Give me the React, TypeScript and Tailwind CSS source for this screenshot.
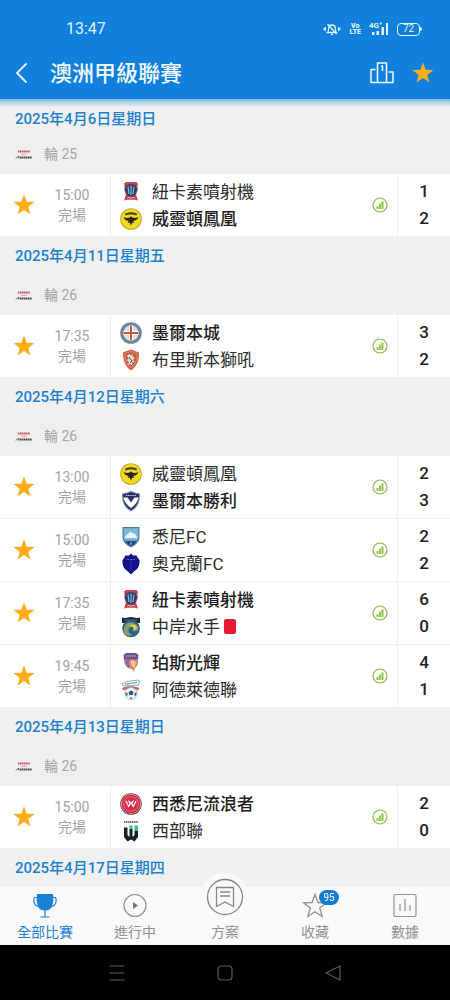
import React from "react";

type Crest =
  | "jets" | "phoenix" | "city" | "roar" | "victory" | "sydney"
  | "auckland" | "mariners" | "glory" | "adelaide" | "wanderers" | "western";

interface Team {
  name: string;
  crest: Crest;
  score: number;
  winner?: boolean;
  redCard?: boolean;
}

interface Match {
  time: string;
  teams: [Team, Team];
}

interface Day {
  date: string;
  round?: number;
  matches: Match[];
}

const days: Day[] = [
  {
    date: "2025年4月6日星期日",
    round: 25,
    matches: [
      { time: "15:00", teams: [{ name: "紐卡素噴射機", crest: "jets", score: 1 }, { name: "威靈頓鳳凰", crest: "phoenix", score: 2, winner: true }] },
    ],
  },
  {
    date: "2025年4月11日星期五",
    round: 26,
    matches: [
      { time: "17:35", teams: [{ name: "墨爾本城", crest: "city", score: 3, winner: true }, { name: "布里斯本獅吼", crest: "roar", score: 2 }] },
    ],
  },
  {
    date: "2025年4月12日星期六",
    round: 26,
    matches: [
      { time: "13:00", teams: [{ name: "威靈頓鳳凰", crest: "phoenix", score: 2 }, { name: "墨爾本勝利", crest: "victory", score: 3, winner: true }] },
      { time: "15:00", teams: [{ name: "悉尼FC", crest: "sydney", score: 2 }, { name: "奧克蘭FC", crest: "auckland", score: 2 }] },
      { time: "17:35", teams: [{ name: "紐卡素噴射機", crest: "jets", score: 6, winner: true }, { name: "中岸水手", crest: "mariners", score: 0, redCard: true }] },
      { time: "19:45", teams: [{ name: "珀斯光輝", crest: "glory", score: 4, winner: true }, { name: "阿德萊德聯", crest: "adelaide", score: 1 }] },
    ],
  },
  {
    date: "2025年4月13日星期日",
    round: 26,
    matches: [
      { time: "15:00", teams: [{ name: "西悉尼流浪者", crest: "wanderers", score: 2, winner: true }, { name: "西部聯", crest: "western", score: 0 }] },
    ],
  },
  { date: "2025年4月17日星期四", matches: [] },
];

const crests: Record<Crest, React.ReactNode> = {
  jets: (
    <>
      <path d="M4 2.500 6 1h10l2 1.500-.6 3 .4 3-1.800 5.500.5 1 1.500 4.500-3.500-.8H7.500L4 19.500 5.500 15l.5-1-1.800-5.500.4-3z" fill="#c8434a" />
      <path d="M6 4.500C8 2.800 14 2.800 16 4.500l1 3.500c0 3-1.500 5.500-3.500 7.500h-5C6.500 13.500 5 11 5 8z" fill="#24456f" />
      <path d="M8 5.500 9 13M11 4.500V14M14 5.500 13 13" stroke="#9fc0dc" strokeWidth="1.100" />
      <path d="M7.500 17.500 9 16l2 1.500 2-1.500 1.500 1.500" stroke="#f1b2b2" fill="none" />
    </>
  ),
  phoenix: (
    <>
      <circle cx="11" cy="11" r="10.800" fill="#b9a21d" />
      <circle cx="11" cy="11" r="10" fill="#f3da21" />
      <path d="M5 5.800C8 3.800 14 3.800 17 5.800l-.5 1.700C13.500 6 8.500 6 5.500 7.500z" fill="#4b431a" />
      <path d="M3.500 9c2.500 1.200 4.500 1 6 .6L11 8.300l1.500 1.300c1.500.4 3.500.6 6-.6-.8 2.400-2.500 3.600-5.200 3.900l1 2-2-.3L11 17.500l-1.300-2.900-2 .3 1-2C6 12.600 4.300 11.400 3.500 9z" fill="#2b2718" />
    </>
  ),
  city: (
    <>
      <circle cx="11" cy="11" r="10.800" fill="#70859a" />
      <circle cx="11" cy="11" r="7.500" fill="#fff" />
      <circle cx="11" cy="11" r="7" fill="#cfe2f2" />
      <path d="M11 3.500v15M3.500 11h15" stroke="#fff" strokeWidth="4" />
      <path d="M11 3.500v15M3.500 11h15" stroke="#dc5136" strokeWidth="2" />
    </>
  ),
  roar: (
    <>
      <path d="M3 3.500 11 .5l8 3C19 11 17.500 17 11 21.500 4.500 17 3 11 3 3.500z" fill="#d75e3c" />
      <path d="M4.800 4.800 11 2.500l6.200 2.300c-.2 6-1.500 10.500-6.200 14.200-4.700-3.700-6-8.200-6.200-14.200z" fill="#b9604c" stroke="#f2a184" strokeWidth=".6" />
      <path d="m7 7 2-2 2 1.500L13 5l-.5 3 2.500 1-2 1.500 1.500 3-2.500-.5.500 4-2-2-2.500 1 1-3L6.500 11l2.500-1z" fill="#f2ded4" />
      <path d="m9 8 3 4-2 2" stroke="#4d3936" fill="none" />
    </>
  ),
  victory: (
    <>
      <path d="M2 3.500Q7 3 11 .8q4 2.200 9 2.700c.5 8-2 14-9 18C4 17.500 1.500 11.500 2 3.500z" fill="#8a94b4" />
      <path d="M3 4.300Q7 4 11 2q4 2 8 2.300c.3 7-2 12.200-8 16-6-3.800-8.300-9-8-16z" fill="#2b3366" />
      <path d="m3.200 7.500 4.300 0L11 12.500l3.500-5 4.300 0c-1 4-3.800 7.500-7.800 10.500-4-3-6.800-6.500-7.800-10.500z" fill="#fff" />
      <path d="M6 5.500h10" stroke="#c5cbe0" strokeWidth="1.200" strokeDasharray="1.200 .6" />
    </>
  ),
  sydney: (
    <>
      <path d="M2.500 1h17v9c0 5-2 8-8.500 11.500C4.500 18 2.500 15 2.500 10z" fill="#4b7ba5" />
      <path d="M3.700 2.200h14.600V10c0 1.800-.4 3.300-1.200 4.600H4.900C4.100 13.300 3.700 11.800 3.700 10z" fill="#7fb7dd" />
      <path d="m4.500 12 2-3 2-1.500 2-2 2 1.500 2.500 1 2.500 4z" fill="#e8f4fb" />
      <path d="M6 15.500h10c-1 1.900-2.600 3.300-5 4.600-2.400-1.300-4-2.700-5-4.600z" fill="#1e3c68" />
      <path d="m11 15.500 1 3h-2z" fill="#c5ddeb" />
    </>
  ),
  auckland: (
    <>
      <path d="M11 .5 13 2.500h3.500L18 5l1.500 2c.3 6-1.500 9-5 11L11 21.500 7.500 18c-3.500-2-5.300-5-5-11L4 5l1.500-2.500H9z" fill="#12108a" />
      <path d="M7 6.500h2M10 6.500h2M13 6.500h2" stroke="#6062ac" />
      <path d="M11 8v10" stroke="#4545a0" strokeWidth=".7" />
    </>
  ),
  mariners: (
    <>
      <path d="M2 1.500 5 2l6-1 6 1 3-.5V7H2z" fill="#1b2a34" />
      <path d="M5 4h12" stroke="#99a6a8" strokeWidth="1" strokeDasharray="1 .6" />
      <circle cx="11" cy="12.500" r="8.800" fill="#28618b" />
      <path d="M4 17C2.500 11 6 6 11.500 6.500c5 .5 7.500 4 6.500 8-2 .8-4 1-6.500.2 2.200-.2 3-1.700 2-3-1.500-1.500-4.500-.7-5 2-.4 2.800 1.500 4.700 4.500 5.300-4 1.500-7.500.3-9-2z" fill="#88a068" />
      <path d="M9 10c2-2.500 7-2 8 1.500-.5 2-2.500 2.500-4 2.200 1.500-1.500.5-3.700-4-3.700z" fill="#efcf45" />
    </>
  ),
  glory: (
    <>
      <path d="M3.500 3 6 1h10l2.500 2-.5 5H4z" fill="#6f4f91" />
      <path d="M6 4h10" stroke="#d0bfe0" strokeWidth="1.200" strokeDasharray="1.300 .6" />
      <path d="M4 7.500h14c.5 4-.5 7-3 8.500l-1 4-2-3C7 16.500 4 13 4 7.500z" fill="#d98968" />
      <path d="M5 8h5l-1.500 3 2 3-1.500 2C6.500 14.500 5 12 5 8z" fill="#8c6aa3" />
      <path d="m11 8 4 1 1.500 3-2 1 .5 2.500-3-1.500-1-2.500z" fill="#f0c5a7" />
    </>
  ),
  adelaide: (
    <>
      <path d="M2 5 7 2.500 18 1l1.500 1-1 4L3 7z" fill="#fff" stroke="#5f9dc3" strokeWidth=".8" />
      <path d="M5 5.200 17 3.500" stroke="#4d91bc" strokeWidth="1.400" strokeDasharray="1.500 .6" />
      <path d="M2 9c5-2.500 12-2.500 17.500 0l-1.500 2.500C13 9 8 9 3.500 11.500z" fill="#c86660" />
      <circle cx="11" cy="14.500" r="6" fill="#f4f8fa" stroke="#8fb3c8" strokeWidth=".8" />
      <path d="m8.500 13 2.500-1.500 2.500 1.500-1 3h-3zM5.300 14l2-.5.3 2.500-1 1.200zM16.700 14l-2-.5-.3 2.500 1 1.200zM9.500 18.500h3l-1.500 2z" fill="#32567f" />
    </>
  ),
  wanderers: (
    <>
      <circle cx="11" cy="11" r="10.800" fill="#6b3a44" />
      <circle cx="11" cy="11" r="10" fill="#f3c9cf" />
      <circle cx="11" cy="11" r="9.400" fill="#d52c48" />
      <circle cx="11" cy="11" r="7.200" fill="none" stroke="#ed8396" strokeWidth=".7" />
      <path d="m6 8 2.700 5.500L11 9.500l2.300 4L16 8M8.500 7.500l2 3.500M13.500 7.500l-2 3.500" fill="none" stroke="#fff" strokeWidth="1.200" />
    </>
  ),
  western: (
    <>
      <path d="M4 2h14" stroke="#444" strokeWidth="1.600" strokeDasharray="1.400 .5" />
      <path d="M4 7.500h3.500V15L9.500 17V9h3v8l2-2V11H18v6l-3.500 4.500L11 19.500l-3.500 2L4 17z" fill="#16242a" />
      <path d="M14.500 5.500H18V11h-3.500zM9.500 5.500h3V9h-3z" fill="#39bd8d" />
    </>
  ),
};

function TeamCrest({ crest }: { crest: Crest }) {
  return (
    <svg viewBox="0 0 22 22" fill="none" aria-hidden="true" className="h-[22px] w-[22px] shrink-0">
      {crests[crest]}
    </svg>
  );
}

function SolidStar() {
  return (
    <svg viewBox="0 0 22 22" aria-hidden="true" className="h-[22px] w-[22px]">
      <path d="m11 .3 2.700 7.500 7.800.3-6.200 4.800 2.200 7.500L11 16.100l-6.500 4.300 2.200-7.500L.5 8.100l7.800-.3z" fill="#fdad17" />
    </svg>
  );
}

function LeagueLogo() {
  return (
    <svg viewBox="0 0 18 12" aria-hidden="true" className="h-3 w-[18px]">
      <path d="M3 2.500h12" stroke="#d4545c" strokeWidth="2" strokeDasharray="1.600 .4" />
      <path d="M6 5.300h6" stroke="#e3a5a8" strokeWidth="1" />
      <path d="m1 9.500 2-2h1v2" stroke="#444" fill="none" />
      <path d="M5 8.500h12" stroke="#4b4b4b" strokeWidth="2" strokeDasharray="1.500 .4" />
    </svg>
  );
}

function StatusBar() {
  return (
    <div className="flex h-[47px] items-center justify-between pr-7 pl-[66px] pt-[11px] text-[#dff5ff]">
      <time className="text-base">13:47</time>
      <div className="flex items-center gap-2">
        <svg viewBox="0 0 20 14" fill="none" stroke="currentColor" strokeWidth="1.300" aria-hidden="true" className="h-3.5 w-5">
          <path d="M5.500 10.500h9c-1-1-1.200-2-1.200-4 0-2-1.300-3.500-3.300-3.500S6.700 4.500 6.700 6.500c0 2-.2 3-1.200 4zM9 12.500h2M5.500 2l9 10" />
          <path d="m4 4.500-3 2.500 3 2.500zM16 4.500l3 2.500-3 2.500z" fill="currentColor" stroke="none" />
        </svg>
        <div className="flex flex-col items-center font-[Roboto] text-[7px] leading-[6px] font-black">
          <span>Vo</span>
          <span>LTE</span>
        </div>
        <div className="relative h-3.5 w-5">
          <svg viewBox="0 0 20 14" fill="currentColor" aria-hidden="true" className="h-3.5 w-5">
            <path d="M3 10h2.500v3H3zM7.500 9H10v4H7.500zM12.500 5H15v8h-2.500zM17 1h2v12h-2z" />
          </svg>
          <span className="absolute top-0 left-0 text-[8px] leading-[8px] font-bold">4G⁺</span>
        </div>
        <div className="flex items-center">
          <span className="flex h-[13px] w-[23px] items-center justify-center rounded-[4px] border border-current text-[10px] leading-none">72</span>
          <span className="h-1 w-0.5 rounded-r bg-current" />
        </div>
      </div>
    </div>
  );
}

function Header() {
  return (
    <header className="relative z-20 shrink-0 bg-[#1080dc]">
      <StatusBar />
      <div className="flex h-[52px] items-center pr-4 pl-3.5 text-[#eefaff]">
        <button aria-label="返回" className="flex h-8 w-9 items-center">
          <svg viewBox="0 0 14 22" fill="none" stroke="currentColor" strokeWidth="1.800" aria-hidden="true" className="h-[22px] w-3.5">
            <path d="M12.500 1.500 3 11l9.500 9.500" />
          </svg>
        </button>
        <h1 className="flex-1 pt-0.5 text-[22px] leading-8 font-medium">澳洲甲級聯賽</h1>
        <button aria-label="積分榜" className="mr-[18px]">
          <svg viewBox="0 0 24 22" fill="none" stroke="currentColor" strokeWidth="1.500" strokeLinejoin="round" aria-hidden="true" className="h-[22px] w-6">
            <path d="M7.500 20.500V1h9v19.500M5.500 7.500H1v13h22V10h-4.500M11.200 4.500l1.300-.8V9" />
          </svg>
        </button>
        <button aria-label="收藏聯賽">
          <SolidStar />
        </button>
      </div>
      <div className="absolute inset-x-0 top-full h-2 bg-linear-to-b from-[#1080dc]/50 to-transparent" />
    </header>
  );
}

function MatchRow({ match }: { match: Match }) {
  return (
    <li className="flex h-[62px] box-content border-b border-[#f1f1f1] bg-white last:border-b-0">
      <button aria-label="收藏比賽" className="flex w-12 items-center justify-center">
        <SolidStar />
      </button>
      <div className="flex w-[63px] flex-col justify-center border-r border-[#eeeeee] pr-3.5 text-center text-[14px] leading-5 text-[#a2a2a2]">
        <time>{match.time}</time>
        <span>完場</span>
      </div>
      <div className="flex min-w-0 flex-1 flex-col justify-center pl-[9px]">
        {match.teams.map((team) => (
          <div key={team.name} className="flex h-[27px] items-center">
            <TeamCrest crest={team.crest} />
            <span className={team.winner ? "ml-2.5 pt-0.5 text-[17px] leading-[25px] font-medium text-[#1d1d1d]" : "ml-2.5 pt-0.5 text-[17px] leading-[25px] text-[#2c2c2c]"}>
              {team.name}
            </span>
            {team.redCard && <span role="img" aria-label="紅牌" className="ml-1 h-[15px] w-3 rounded-[2px] bg-[#e5192f]" />}
          </div>
        ))}
      </div>
      <button aria-label="比賽統計" className="mr-2 flex w-[18px] items-center justify-center">
        <svg viewBox="0 0 16 16" aria-hidden="true" className="h-4 w-4">
          <circle cx="8" cy="8" r="7" fill="none" stroke="#88b94a" strokeWidth="1.200" />
          <path d="M4.500 9h2v3h-2zM7 6.500h1.800V12H7zM9.400 4.500h2.100V12H9.400z" fill="#8cc63f" />
        </svg>
      </button>
      <div className="flex w-[53px] flex-col justify-center border-l border-[#f0f0f0] text-center text-[17px] leading-[27px] font-medium text-[#222222]">
        {match.teams.map((team) => (
          <span key={team.name}>{team.score}</span>
        ))}
      </div>
    </li>
  );
}

function DaySection({ day }: { day: Day }) {
  return (
    <section className="first:-mt-1">
      <h2 className="sticky top-0 z-10 flex h-10 items-center border-b border-[#eaeaea] bg-[#f0f0f0] pt-0.5 pl-[15px] text-[15px] font-medium text-[#1a80cd]">
        {day.date}
      </h2>
      {day.round && (
        <div className="flex h-[39px] items-center gap-[11px] bg-[#efefef] pl-[15px] text-[14px] text-[#a6a6a6]">
          <LeagueLogo />
          <span>輪 {day.round}</span>
        </div>
      )}
      <ul>
        {day.matches.map((match) => (
          <MatchRow key={match.time} match={match} />
        ))}
      </ul>
    </section>
  );
}

const tabClass = "flex flex-1 flex-col items-center gap-[3px] pt-1.5 text-[14px] leading-5 text-[#929292]";

function TabBar() {
  return (
    <nav className="relative z-10 flex h-[58px] shrink-0 bg-[#f9f9f9]">
      <a href="#all" aria-current="page" className="flex flex-1 flex-col items-center gap-[3px] pt-1.5 text-[14px] leading-5 text-[#1a80d2]">
        <svg viewBox="0 0 26 26" fill="none" stroke="currentColor" strokeWidth="1.200" aria-hidden="true" className="h-[26px] w-[26px]">
          <path d="M5.500 1.500h15c.5 3 .3 8-.7 11-1 2.500-3.800 4.500-6.800 4.500s-5.800-2-6.800-4.500c-1-3-1.200-8-.7-11z" fill="currentColor" />
          <path d="M5.500 4.500h-3C1.200 7 1.500 12.500 6.500 13.500M20.500 4.500h3c1.300 2.500 1 8-4 9M13 17v7M8.500 24h9" />
        </svg>
        全部比賽
      </a>
      <a href="#live" className={tabClass}>
        <svg viewBox="0 0 26 26" fill="none" stroke="currentColor" strokeWidth="1.200" aria-hidden="true" className="h-[26px] w-[26px]">
          <circle cx="13" cy="12.500" r="11" />
          <path d="M11 9v7l5-3.500z" fill="#777" stroke="none" />
        </svg>
        進行中
      </a>
      <a href="#plans" className="relative flex flex-1 flex-col items-center pt-[35px] text-[14px] leading-5 text-[#929292]">
        <span className="absolute -top-3.5 flex h-12 w-12 items-center justify-center rounded-full bg-[#f9f9f9]">
          <svg viewBox="0 0 38 38" fill="none" stroke="#858585" strokeWidth="1.300" aria-hidden="true" className="h-[38px] w-[38px]">
            <circle cx="19" cy="19" r="17.500" />
            <path d="M10.500 9.500h17v19L19 24l-8.500 4.500zM14 14h10M14 18h10" />
          </svg>
        </span>
        方案
      </a>
      <a href="#favourites" className={tabClass}>
        <span className="relative">
          <svg viewBox="0 0 26 26" fill="none" stroke="currentColor" strokeWidth="1.300" aria-hidden="true" className="h-[26px] w-[26px]">
            <path d="m13 1.500 3 8 8.500.3-6.800 5.200 2.500 8.500L13 18.700 5.800 23.500 8.300 15 1.500 9.800l8.500-.3z" />
          </svg>
          <span className="absolute -top-[3px] left-[17px] flex h-[15px] w-5 items-center justify-center rounded-full bg-[#147bd0] text-[10px] leading-none text-white">95</span>
        </span>
        收藏
      </a>
      <a href="#data" className={tabClass}>
        <svg viewBox="0 0 26 26" fill="none" stroke="currentColor" strokeWidth="1.200" aria-hidden="true" className="h-[26px] w-[26px]">
          <rect x="2" y="1.500" width="22" height="22" rx="1.500" />
          <path d="M8 11v7M13 6v12M18 12v6" />
        </svg>
        數據
      </a>
    </nav>
  );
}

function SystemBar() {
  return (
    <div className="flex h-[55px] shrink-0 items-center justify-between bg-black px-[108px] text-[#5c5c5c]">
      <button aria-label="最近使用">
        <svg viewBox="0 0 18 18" fill="none" stroke="currentColor" strokeWidth="1.200" aria-hidden="true" className="h-[18px] w-[18px]">
          <path d="M1.500 2h15M1.500 9h15M1.500 16h15" />
        </svg>
      </button>
      <button aria-label="主畫面">
        <svg viewBox="0 0 18 18" fill="none" stroke="currentColor" strokeWidth="1.200" aria-hidden="true" className="h-[18px] w-[18px]">
          <rect x="2" y="2" width="14" height="14" rx="3.500" />
        </svg>
      </button>
      <button aria-label="上一頁">
        <svg viewBox="0 0 18 18" fill="none" stroke="currentColor" strokeWidth="1.200" strokeLinejoin="round" aria-hidden="true" className="h-[18px] w-[18px]">
          <path d="M16 2v14L2 9z" />
        </svg>
      </button>
    </div>
  );
}

export default function App() {
  return (
    <div className="flex h-dvh flex-col overflow-hidden bg-[#f0f0f0] font-[Roboto,'Noto_Sans_CJK_TC',sans-serif]">
      <Header />
      <main className="min-h-0 flex-1 overflow-y-auto [scrollbar-width:none]">
        {days.map((day) => (
          <DaySection key={day.date} day={day} />
        ))}
      </main>
      <TabBar />
      <SystemBar />
    </div>
  );
}
